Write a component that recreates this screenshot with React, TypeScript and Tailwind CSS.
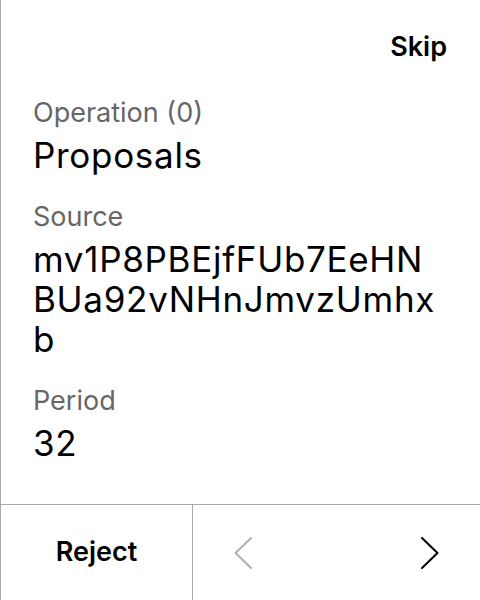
const fields = [
  { label: "Operation (0)", value: "Proposals" },
  { label: "Source", value: "mv1P8PBEjfFUb7EeHNBUa92vNHnJmvzUmhxb" },
  { label: "Period", value: "32" },
];

function Chevron({ dir, className }: { dir: "left" | "right"; className: string }) {
  return (
    <svg width="18" height="32" viewBox="0 0 18 32" fill="none" className={className}>
      <polyline
        points={dir === "left" ? "17,1 1.5,16 17,31" : "1,1 16.5,16 1,31"}
        stroke="currentColor"
        strokeWidth="2"
        strokeLinecap="round"
        strokeLinejoin="round"
      />
    </svg>
  );
}

function App() {
  return (
    <div
      className="flex h-[600px] w-[480px] flex-col border-l border-[#aaaaaa] bg-white text-black"
      style={{ fontFamily: "Inter, 'Noto Sans', sans-serif" }}
    >
      <header className="flex justify-end px-[33px] pt-[31px]">
        <button className="text-[27px] font-semibold leading-[32px]">Skip</button>
      </header>

      <main className="flex flex-1 flex-col gap-[24px] pl-[32px] pr-[38px] pt-[32px]">
        {fields.map((field) => (
          <section key={field.label} className="flex flex-col">
            <span className="text-[27px] leading-[36px] text-[#666666]">{field.label}</span>
            <span className="mt-[4px] break-all text-[35px] leading-[40px] tracking-[0.02em]">
              {field.value}
            </span>
          </section>
        ))}
      </main>

      <footer className="flex h-[96px] border-t border-[#aaaaaa]">
        <button className="flex w-[192px] items-center justify-center border-r border-[#aaaaaa] text-[27px] font-semibold">
          Reject
        </button>
        <div className="flex flex-1 items-center justify-between px-[41px]">
          <Chevron dir="left" className="text-[#b0b0b0]" />
          <Chevron dir="right" className="text-black" />
        </div>
      </footer>
    </div>
  );
}

export default App;
